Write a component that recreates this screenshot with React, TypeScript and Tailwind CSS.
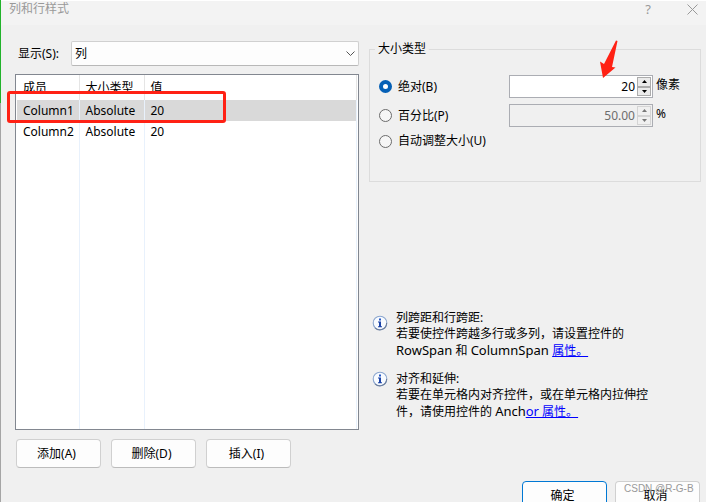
import { useState } from "react";

const rows = [
  { name: "Column1", type: "Absolute", value: 20 },
  { name: "Column2", type: "Absolute", value: 20 },
];

const pushButton =
  "h-[29px] w-[85px] rounded-[4px] border border-[#d0d0d0] border-b-[#bcbcbc] bg-[#fdfdfd] pr-1 text-center";

function InfoIcon() {
  return (
    <svg className="h-4 w-4 shrink-0" viewBox="0 0 16 16" aria-hidden="true">
      <circle cx="8" cy="8" r="6.8" fill="#f8fbff" stroke="#8ba6cf" strokeWidth="1.1" />
      <path d="M3 12.8A6.8 6.8 0 0 0 14.6 8" fill="none" stroke="#6d7f9d" strokeWidth="1.1" />
      <rect x="7" y="3.5" width="2" height="2" fill="#2458c5" />
      <path d="M6 6.5h3v4.8h1v1H6v-1h1V7.5H6z" fill="#1b43a8" />
    </svg>
  );
}

function Spinner({
  label,
  value,
  disabled,
  onChange,
  onStep,
}: {
  label: string;
  value: string;
  disabled?: boolean;
  onChange?: (value: string) => void;
  onStep?: (step: number) => void;
}) {
  return (
    <div
      className={`flex h-[23px] w-36 border border-[#abadb3] p-px ${disabled ? "bg-[#f0f0f0] text-[#6d6d6d]" : "bg-white text-black"}`}
    >
      <input
        type="text"
        aria-label={label}
        className="min-w-0 flex-1 bg-transparent pr-[2px] text-right leading-[18px] outline-none"
        value={value}
        disabled={disabled}
        readOnly={!onChange}
        onChange={(event) => onChange?.(event.target.value)}
      />
      <div className="flex w-[14px] flex-col">
        {[1, -1].map((step) => (
          <button
            key={step}
            type="button"
            aria-label={`${label} ${step > 0 ? "+" : "-"}`}
            disabled={disabled}
            onClick={() => onStep?.(step)}
            className={`flex flex-1 items-center justify-center border ${disabled ? "border-[#d4d4d4] bg-[#f0f0f0] text-[#777777]" : "border-[#acacac] bg-[#ebebeb] text-black"}`}
          >
            <svg width="5" height="3" viewBox="0 0 5 3" aria-hidden="true">
              <path d={step > 0 ? "M0 3 2.5 0 5 3z" : "M0 0 2.5 3 5 0z"} fill="currentColor" />
            </svg>
          </button>
        ))}
      </div>
    </div>
  );
}

function Radio({
  id,
  label,
  checked,
  onSelect,
}: {
  id: string;
  label: string;
  checked: boolean;
  onSelect: () => void;
}) {
  return (
    <div className="flex flex-1 items-center gap-[6px]">
      <input
        id={id}
        type="radio"
        name="size-type"
        checked={checked}
        onChange={onSelect}
        className="h-[13px] w-[13px] appearance-none rounded-full border border-[#6b6b6b] bg-[#f6f6f6] checked:border-4 checked:border-[#0560b6] checked:bg-white"
      />
      <label htmlFor={id}>{label}</label>
    </div>
  );
}

export default function App() {
  const [mode, setMode] = useState("absolute");
  const [pixels, setPixels] = useState("20");

  return (
    <div className="flex h-screen overflow-hidden bg-[#f0f0f0] font-['Noto_Sans','Noto_Sans_CJK_SC',sans-serif] text-[12px] leading-4 text-black">
      <div className="flex w-px shrink-0 flex-col bg-[#a5a5a5]">
        <div className="h-[103px] bg-[#22b32b]" />
      </div>
      <div className="flex min-w-0 flex-1 flex-col">
        <header className="flex h-[25px] shrink-0 items-start justify-between border-t border-white bg-[#f3f3f3] pl-2 pr-2 text-[#999999]">
          <h1>列和行样式</h1>
          <div className="flex items-center gap-9">
            <button type="button" aria-label="帮助" className="text-[13px] leading-4">
              ?
            </button>
            <button type="button" aria-label="关闭">
              <svg width="11" height="11" viewBox="0 0 11 11" aria-hidden="true">
                <path d="M.5.5l10 10M10.5.5l-10 10" stroke="currentColor" fill="none" />
              </svg>
            </button>
          </div>
        </header>

        <main className="grid grid-cols-[344fr_332fr] gap-[10px] pl-[14px] pr-[5px] pt-4">
          <section>
            <div className="flex items-center pl-[3px]">
              <label htmlFor="show" className="w-[53px] shrink-0">
                显示(S):
              </label>
              <div className="relative flex-1">
                <select
                  id="show"
                  className="block h-[25px] w-full appearance-none rounded-[2px] border border-[#d0d0d0] border-b-[#b8b8b8] bg-[#fdfdfd] pl-[3px] outline-none"
                >
                  <option>列</option>
                  <option>行</option>
                </select>
                <svg
                  className="pointer-events-none absolute right-1 top-[10px]"
                  width="9"
                  height="6"
                  viewBox="0 0 9 6"
                  aria-hidden="true"
                >
                  <path d="M.5.5l4 4 4-4" fill="none" stroke="#555555" />
                </svg>
              </div>
            </div>

            <div className="relative mt-2 h-[356px] border border-[#828790] bg-white px-px">
              <table className="h-full w-full table-fixed border-collapse text-left">
                <colgroup>
                  <col className="w-[62px]" />
                  <col className="w-[65px]" />
                  <col />
                </colgroup>
                <thead>
                  <tr className="h-[25px]">
                    {["成员", "大小类型", "值"].map((title) => (
                      <th key={title} className="border-r border-[#e5e5e5] pl-[6px] font-normal">
                        {title}
                      </th>
                    ))}
                  </tr>
                </thead>
                <tbody>
                  {rows.map((row, index) => (
                    <tr key={row.name} className={`h-[21px] ${index === 0 ? "bg-[#d9d9d9]" : ""}`}>
                      <td className="border-r border-[#e8f1fc] pl-[6px]">{row.name}</td>
                      <td className="border-r border-[#e8f1fc] pl-[6px]">{row.type}</td>
                      <td className="border-r border-[#e8f1fc] pl-[6px]">{row.value}</td>
                    </tr>
                  ))}
                  <tr>
                    <td className="border-r border-[#e8f1fc]" />
                    <td className="border-r border-[#e8f1fc]" />
                    <td className="border-r border-[#e8f1fc]" />
                  </tr>
                </tbody>
              </table>
              <div className="pointer-events-none absolute -left-[9px] top-4 h-8 w-[219px] rounded-[3px] border-3 border-[#ff2114]" />
            </div>

            <div className="mt-[9px] flex gap-[10px] pl-px">
              <button type="button" className={pushButton}>
                添加(A)
              </button>
              <button type="button" className={pushButton}>
                删除(D)
              </button>
              <button type="button" className={pushButton}>
                插入(I)
              </button>
            </div>
          </section>

          <section>
            <fieldset className="relative h-[141px] border border-[#dcdcdc] pl-[9px] pr-[11px]">
              <legend className="-ml-1 px-[3px]">大小类型</legend>
              <div className="mt-[18px] flex h-[23px] items-center">
                <Radio
                  id="absolute"
                  label="绝对(B)"
                  checked={mode === "absolute"}
                  onSelect={() => setMode("absolute")}
                />
                <Spinner
                  label="绝对"
                  value={pixels}
                  onChange={setPixels}
                  onStep={(step) => setPixels(String(Number(pixels) + step))}
                />
                <span className="w-9 pb-1 pl-[3px]">像素</span>
              </div>
              <div className="mt-[6px] flex h-[23px] items-center">
                <Radio
                  id="percent"
                  label="百分比(P)"
                  checked={mode === "percent"}
                  onSelect={() => setMode("percent")}
                />
                <Spinner label="百分比" value="50.00" disabled />
                <span className="w-9 pb-1 pl-[3px]">%</span>
              </div>
              <div className="mt-[6px] flex">
                <Radio
                  id="auto"
                  label="自动调整大小(U)"
                  checked={mode === "auto"}
                  onSelect={() => setMode("auto")}
                />
              </div>
              <svg
                className="pointer-events-none absolute -top-[18px] right-[81px]"
                width="20"
                height="40"
                viewBox="0 0 20 40"
                aria-hidden="true"
              >
                <path d="M17 1.5 18.5 2 13 28 16.5 28.5 4 39 1 22.5 5 25z" fill="#ff2114" />
              </svg>
            </fieldset>

            <div className="mt-32 flex gap-2 pl-[3px]">
              <div className="pt-[5px]">
                <InfoIcon />
              </div>
              <p>
                列跨距和行跨距:
                <br />
                若要使控件跨越多行或多列，请设置控件的
                <br />
                <span className="text-[13px]">RowSpan</span> 和{" "}
                <span className="text-[13px]">ColumnSpan </span>
                <a href="#span" className="text-[#0000ff] underline">
                  属性。
                </a>
              </p>
            </div>
            <div className="mt-3 flex gap-2 pl-[3px]">
              <InfoIcon />
              <p>
                对齐和延伸:
                <br />
                若要在单元格内对齐控件，或在单元格内拉伸控
                <br />
                件，请使用控件的 <span className="text-[13px]">Anch</span>
                <a href="#anchor" className="text-[#0000ff] underline">
                  <span className="text-[13px]">or</span> 属性。
                </a>
              </p>
            </div>
          </section>
        </main>

        <footer className="mt-[13px] flex shrink-0 justify-end gap-2 pr-[6px]">
          <button
            type="button"
            className="h-[29px] w-[85px] rounded-[4px] border border-[#0078d4] bg-[#fdfdfd] pr-1 text-center"
          >
            确定
          </button>
          <div className="relative">
            <button type="button" className={pushButton}>
              取消
            </button>
            <span className="pointer-events-none absolute left-[9px] top-0 whitespace-nowrap font-['Liberation_Sans',sans-serif] text-[10px] text-[#999999]">
              CSDN @R-G-B
            </span>
          </div>
        </footer>
      </div>
    </div>
  );
}
